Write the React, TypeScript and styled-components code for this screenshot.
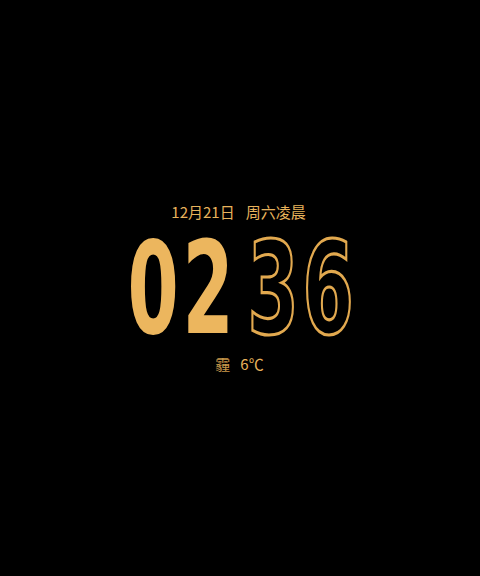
import React from 'react';
import styled, { createGlobalStyle } from 'styled-components';

const GlobalStyle = createGlobalStyle`
  html, body {
    margin: 0;
    padding: 0;
    background: #000;
  }
`;

const Screen = styled.div`
  width: 480px;
  height: 576px;
  background: #000;
  display: flex;
  flex-direction: column;
  align-items: center;
  padding-top: 203px;
  box-sizing: border-box;
  color: #e8b35c;
  font-family: "Noto Sans CJK SC", "Noto Sans", sans-serif;
`;

const DateLine = styled.div`
  display: flex;
  gap: 11px;
  font-size: 15px;
  line-height: 18px;
  margin-left: -3px;
`;

const Clock = styled.div`
  display: flex;
  align-items: center;
  gap: 18px;
  margin-top: 18px;
  margin-left: 1px;
`;

const Group = styled.div`
  display: flex;
  gap: 8px;
`;

const DigitBox = styled.div`
  width: 47px;
  height: 98px;
  display: flex;
  align-items: center;
  justify-content: center;
  overflow: visible;
`;

const DigitGlyph = styled.span<{ $outline?: boolean }>`
  display: inline-block;
  font-family: "DejaVu Sans Condensed", "DejaVu Sans", sans-serif;
  font-weight: 700;
  font-size: 128px;
  line-height: 98px;
  transform: translateY(1px) scaleX(0.64);
  color: ${(p) => (p.$outline ? 'transparent' : '#ecb65e')};
  -webkit-text-stroke: ${(p) => (p.$outline ? '3.2px #e2a94f' : '0')};
`;

const Weather = styled.div`
  display: flex;
  align-items: center;
  gap: 10px;
  margin-top: 18px;
  margin-left: -1px;
  font-size: 15px;
  line-height: 18px;
`;

const Haze = styled.span`
  color: #c9974a;
`;

const Digit: React.FC<{ d: string; outline?: boolean }> = ({ d, outline }) => (
  <DigitBox>
    <DigitGlyph $outline={outline}>{d}</DigitGlyph>
  </DigitBox>
);

const App: React.FC = () => {
  return (
    <Screen>
      <GlobalStyle />
      <DateLine>
        <span>12月21日</span>
        <span>周六凌晨</span>
      </DateLine>
      <Clock>
        <Group>
          <Digit d="0" />
          <Digit d="2" />
        </Group>
        <Group>
          <Digit d="3" outline />
          <Digit d="6" outline />
        </Group>
      </Clock>
      <Weather>
        <Haze>霾</Haze>
        <span>6℃</span>
      </Weather>
    </Screen>
  );
};

export default App;
